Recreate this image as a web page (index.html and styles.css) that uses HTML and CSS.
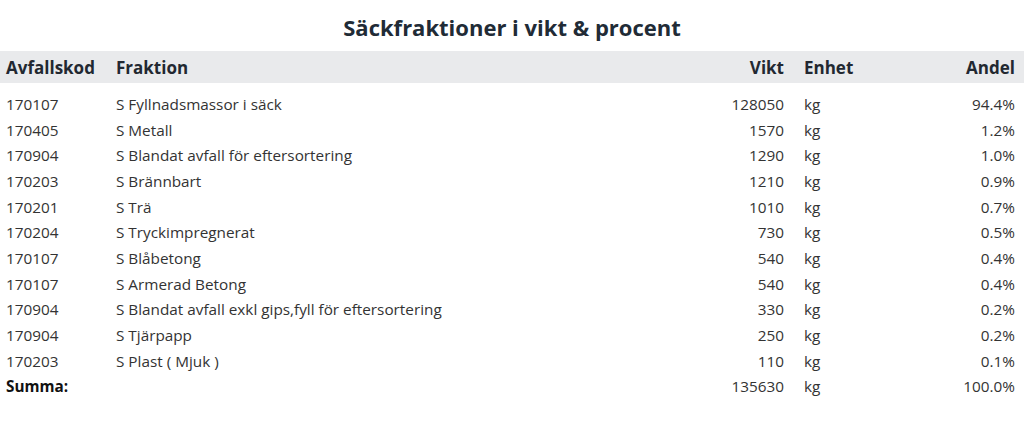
FILE: index.html
```html
<!DOCTYPE html>
<html lang="sv">
<head>
<meta charset="utf-8">
<link rel="stylesheet" href="styles.css">
</head>
<body>
<h2 class="title">Säckfraktioner i vikt &amp; procent</h2>
<table class="tbl">
  <colgroup>
    <col class="c-kod"><col class="c-frak"><col class="c-vikt"><col class="c-enh"><col class="c-and">
  </colgroup>
  <thead>
    <tr><th class="l">Avfallskod</th><th class="l">Fraktion</th><th class="r vikt">Vikt</th><th class="l enh">Enhet</th><th class="r and">Andel</th></tr>
  </thead>
  <tbody>
    <tr class="first"><td>170107</td><td>S Fyllnadsmassor i säck</td><td class="r vikt">128050</td><td class="enh">kg</td><td class="r and">94.4%</td></tr>
    <tr><td>170405</td><td>S Metall</td><td class="r vikt">1570</td><td class="enh">kg</td><td class="r and">1.2%</td></tr>
    <tr><td>170904</td><td>S Blandat avfall för eftersortering</td><td class="r vikt">1290</td><td class="enh">kg</td><td class="r and">1.0%</td></tr>
    <tr><td>170203</td><td>S Brännbart</td><td class="r vikt">1210</td><td class="enh">kg</td><td class="r and">0.9%</td></tr>
    <tr><td>170201</td><td>S Trä</td><td class="r vikt">1010</td><td class="enh">kg</td><td class="r and">0.7%</td></tr>
    <tr><td>170204</td><td>S Tryckimpregnerat</td><td class="r vikt">730</td><td class="enh">kg</td><td class="r and">0.5%</td></tr>
    <tr><td>170107</td><td>S Blåbetong</td><td class="r vikt">540</td><td class="enh">kg</td><td class="r and">0.4%</td></tr>
    <tr><td>170107</td><td>S Armerad Betong</td><td class="r vikt">540</td><td class="enh">kg</td><td class="r and">0.4%</td></tr>
    <tr><td>170904</td><td>S Blandat avfall exkl gips,fyll för eftersortering</td><td class="r vikt">330</td><td class="enh">kg</td><td class="r and">0.2%</td></tr>
    <tr><td>170904</td><td>S Tjärpapp</td><td class="r vikt">250</td><td class="enh">kg</td><td class="r and">0.2%</td></tr>
    <tr><td>170203</td><td>S Plast ( Mjuk )</td><td class="r vikt">110</td><td class="enh">kg</td><td class="r and">0.1%</td></tr>
    <tr class="sum"><td class="sumlabel">Summa:</td><td></td><td class="r vikt">135630</td><td class="enh">kg</td><td class="r and">100.0%</td></tr>
  </tbody>
</table>
</body>
</html>
```
FILE: styles.css
```css
html, body {
  margin: 0;
  padding: 0;
  background: #ffffff;
  font-family: "Open Sans", "Noto Sans", sans-serif;
  color: #333333;
}
.title {
  margin: 0;
  padding-top: 10px;
  height: 51px;
  box-sizing: border-box;
  text-align: center;
  font-size: 22px;
  font-weight: 700;
  line-height: 34px;
  color: #212b36;
}
.tbl {
  width: 100%;
  border-collapse: collapse;
  table-layout: fixed;
  font-size: 15.3px;
}
.c-kod { width: 110px; }
.c-vikt { width: 100px; }
.c-enh { width: 100px; }
.c-and { width: 132px; }
.tbl thead tr {
  background: #e9eaec;
}
.tbl th {
  height: 32px;
  padding: 0 6px;
  font-size: 17px;
  font-weight: 700;
  color: #222831;
  text-align: left;
}
.tbl td {
  height: 25.7px;
  padding: 0 6px;
  white-space: nowrap;
}
.tbl tbody tr.first td {
  padding-top: 8px;
  height: 33.7px;
  box-sizing: border-box;
}
.tbl .r { text-align: right; }
.tbl .vikt { padding-right: 8px; }
.tbl .enh { padding-left: 12px; }
.tbl .and { padding-right: 9px; }
.sumlabel {
  font-weight: 700;
  color: #111111;
}
```
